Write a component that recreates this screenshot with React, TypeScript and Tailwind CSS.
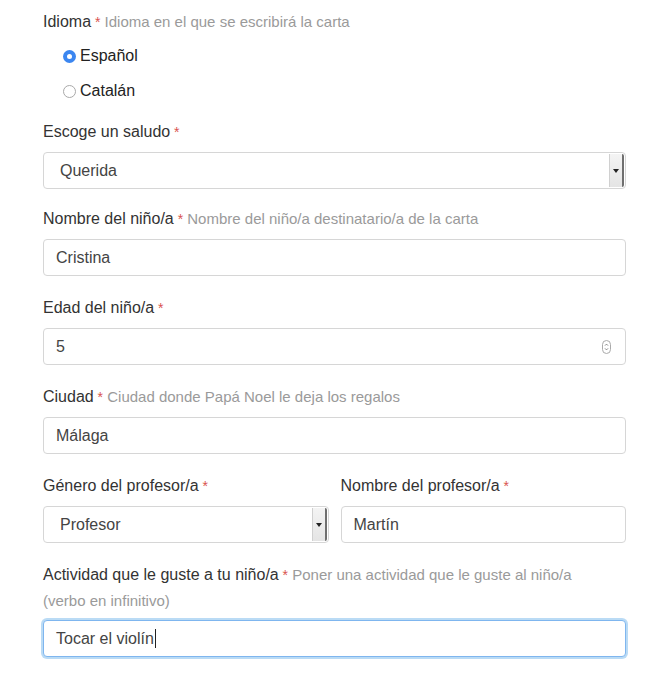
import React from "react";

const font = { fontFamily: '"Liberation Sans", Arial, sans-serif' };

function Req() {
  return <span className="text-[#d9534f] text-[14px]"> *</span>;
}

function Help({ children }: { children: React.ReactNode }) {
  return <span className="text-[#9a9a9a] text-[15px]"> {children}</span>;
}

function Label({ children }: { children: React.ReactNode }) {
  return <div className="text-[16px] leading-[26px] text-[#333] mb-[7px]">{children}</div>;
}

function Input({ value, focused, spinner }: { value: string; focused?: boolean; spinner?: boolean }) {
  return (
    <div
      className={
        "h-[37px] rounded-[4px] border bg-white flex items-center pl-[12px] pr-[14px] text-[16px] text-[#444] " +
        (focused
          ? "border-[#7fb6ef] shadow-[0_0_0_2px_rgba(102,175,233,0.45)]"
          : "border-[#d6d6d6]")
      }
    >
      <span className="flex-1 flex items-center">
        {value}
        {focused && <span className="inline-block w-px h-[19px] bg-[#222] ml-px" />}
      </span>
      {spinner && (
        <span className="w-[9px] h-[14px] rounded-full border border-[#aaa] flex items-center justify-center">
          <svg width="5" height="10" viewBox="0 0 5 10" fill="none" stroke="#777" strokeWidth="0.9">
            <path d="M1 3.6 2.5 2.1 4 3.6" />
            <path d="M1 6.4 2.5 7.9 4 6.4" />
          </svg>
        </span>
      )}
    </div>
  );
}

function Select({ value }: { value: string }) {
  return (
    <div className="h-[37px] rounded-[4px] border border-[#d6d6d6] bg-white flex items-stretch text-[16px] text-[#444]">
      <span className="flex-1 flex items-center pl-[16px]">{value}</span>
      <span className="w-[15px] my-[1px] mr-[1px] bg-gradient-to-b from-[#f4f4f4] to-[#e4e4e4] border-l border-[#d0d0d0] border-r-2 border-r-[#6f6f6f] rounded-r-[2px] flex items-center justify-center">
        <svg width="6" height="4" viewBox="0 0 6 4">
          <path d="M0 0h6L3 4z" fill="#222" />
        </svg>
      </span>
    </div>
  );
}

function Radio({ checked, label }: { checked?: boolean; label: string }) {
  return (
    <div className="flex items-center h-[26px] pl-[20px] text-[16px] text-[#222]">
      {checked ? (
        <span className="w-[13px] h-[13px] rounded-full bg-[#3b86f0] flex items-center justify-center mr-[4px]">
          <span className="w-[5px] h-[5px] rounded-full bg-white" />
        </span>
      ) : (
        <span className="w-[13px] h-[13px] rounded-full border border-[#a9a9a9] bg-white mr-[4px]" />
      )}
      {label}
    </div>
  );
}

export default function App() {
  return (
    <div className="bg-white min-h-[675px] pl-[43px] pr-[46px] pt-[9px]" style={font}>
      <div className="text-[16px] leading-[26px] text-[#333]">
        Idioma<Req /><Help>Idioma en el que se escribirá la carta</Help>
      </div>
      <div className="flex flex-col gap-[9px] mt-[8px] mb-[15px]">
        <Radio checked label="Español" />
        <Radio label="Catalán" />
      </div>

      <Label>
        Escoge un saludo<Req />
      </Label>
      <Select value="Querida" />

      <div className="mt-[17px]">
        <Label>
          Nombre del niño/a<Req /><Help>Nombre del niño/a destinatario/a de la carta</Help>
        </Label>
        <Input value="Cristina" />
      </div>

      <div className="mt-[19px]">
        <Label>
          Edad del niño/a<Req />
        </Label>
        <Input value="5" spinner />
      </div>

      <div className="mt-[19px]">
        <Label>
          Ciudad<Req /><Help>Ciudad donde Papá Noel le deja los regalos</Help>
        </Label>
        <Input value="Málaga" />
      </div>

      <div className="mt-[19px] grid grid-cols-2 gap-x-[12px]">
        <div>
          <Label>
            Género del profesor/a<Req />
          </Label>
          <Select value="Profesor" />
        </div>
        <div>
          <Label>
            Nombre del profesor/a<Req />
          </Label>
          <Input value="Martín" />
        </div>
      </div>

      <div className="mt-[19px]">
        <div className="text-[16px] leading-[26px] text-[#333] mb-[6px] pr-[30px]">
          Actividad que le guste a tu niño/a<Req />
          <Help>Poner una actividad que le guste al niño/a (verbo en infinitivo)</Help>
        </div>
        <Input value="Tocar el violín" focused />
      </div>
    </div>
  );
}
